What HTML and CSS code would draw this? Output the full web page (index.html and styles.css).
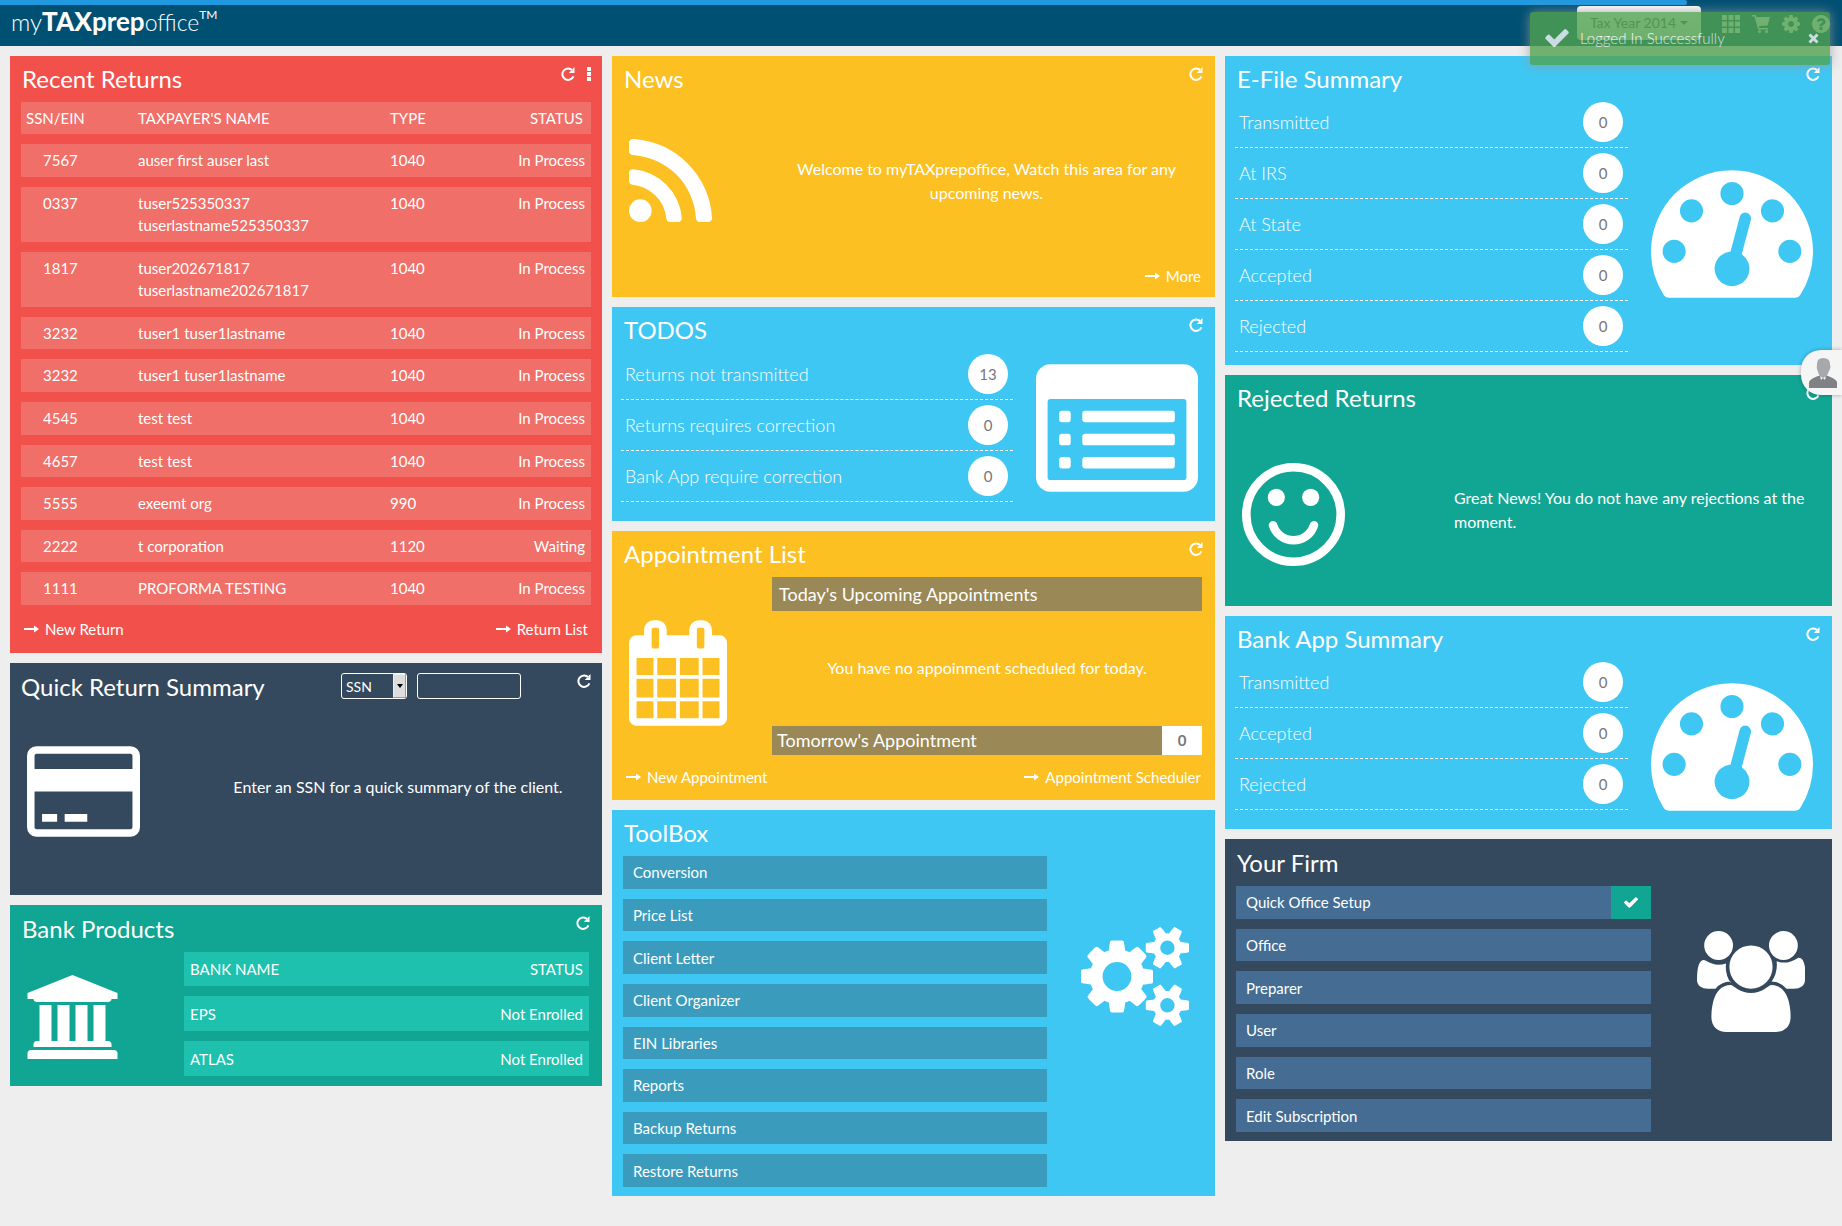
FILE: index.html
```html
<!DOCTYPE html>
<html lang="en">
<head>
<meta charset="utf-8">
<meta name="viewport" content="width=device-width, initial-scale=1">
<title>myTAXprepoffice</title>
<link rel="stylesheet" href="styles.css">
</head>
<body>

<svg class="sprite" aria-hidden="true">
  <symbol id="refresh" viewBox="0 0 14 14"><path d="M11.300 3.300A5.700 5.700 0 1 0 12.400 9.300" fill="none" stroke="currentColor" stroke-width="2"/><path d="M13.500 0v6H7.800l1.900-2 1.700-.3.300-2z"/></symbol>
  <symbol id="arrow" viewBox="0 0 15 8"><path d="M0 3h10V.5L15 4l-5 3.500V5H0z"/></symbol>
  <symbol id="check" viewBox="121 334 1550 1188"><path d="M1671 566q0 40-28 68l-724 724-136 136q-28 28-68 28t-68-28l-136-136-362-362q-28-28-28-68t28-68l136-136q28-28 68-28t68 28l294 295 656-657q28-28 68-28t68 28l136 136q28 28 28 68z"/></symbol>
  <symbol id="gauge" viewBox="0 256 1792 1408"><path d="M384 1152q0-53-37.500-90.500t-90.500-37.500-90.500 37.500-37.500 90.500 37.500 90.500 90.500 37.500 90.500-37.500 37.500-90.500zm192-448q0-53-37.500-90.500t-90.500-37.500-90.500 37.500-37.500 90.500 37.500 90.500 90.500 37.500 90.500-37.500 37.500-90.500zm428 481l101-382q6-26-7.500-48.500t-38.500-29.500-48 6.500-30 39.500l-101 382q-60 5-107 43.500t-63 98.500q-20 77 20 146t117 89 146-20 89-117q16-60-6-117t-72-91zm660-33q0-53-37.500-90.500t-90.500-37.500-90.500 37.500-37.500 90.500 37.500 90.500 90.500 37.500 90.500-37.500 37.500-90.500zm-640-640q0-53-37.500-90.500t-90.500-37.500-90.500 37.500-37.500 90.500 37.500 90.500 90.500 37.500 90.500-37.500 37.500-90.500zm448 192q0-53-37.500-90.500t-90.500-37.500-90.500 37.500-37.500 90.500 37.500 90.500 90.500 37.500 90.500-37.500 37.500-90.500zm320 448q0 261-141 483-19 29-54 29h-1402q-35 0-54-29-141-221-141-483 0-182 71-348t191-286 286-191 348-71 348 71 286 191 191 286 71 348z"/></symbol>
</svg>

<div class="progress"><div class="progress-value" style="width:91.6%"></div></div>

<header class="topbar">
  <a class="logo" href="#"><span class="logo-my">my</span><span class="logo-tax">TAX</span><span class="logo-prep">prep</span><span class="logo-office">office</span><span class="logo-tm">TM</span></a>
  <nav class="tools">
    <button class="year" type="button">Tax Year 2014<span class="caret"></span></button>
    <button class="tool" type="button" aria-label="Apps"><svg viewBox="0 0 18 18"><path d="M0 0h5v5H0zM6.500 0h5v5h-5zM13 0h5v5h-5zM0 6.500h5v5H0zM6.500 6.500h5v5h-5zM13 6.500h5v5h-5zM0 13h5v5H0zM6.500 13h5v5h-5zM13 13h5v5h-5z"/></svg></button>
    <button class="tool" type="button" aria-label="Cart"><svg viewBox="0 0 18 18"><path d="M0 0h3.500l.8 2H18l-2.500 8.500-8.700.5.600 2H16v1.500H6.200L2.500 1.500H0z"/><circle cx="7.500" cy="16.500" r="1.500"/><circle cx="14.500" cy="16.500" r="1.500"/></svg></button>
    <button class="tool" type="button" aria-label="Settings"><svg viewBox="128 128 1536 1536"><path d="M1152 896q0-106-75-181t-181-75-181 75-75 181 75 181 181 75 181-75 75-181zm512-109v222q0 12-8 23t-20 13l-185 28q-19 54-39 91 35 50 107 138 10 12 10 25t-9 23q-27 37-99 108t-94 71q-12 0-26-9l-138-108q-44 23-91 38-16 136-29 186-7 28-36 28h-222q-14 0-24.500-8.500t-11.500-21.500l-28-184q-49-16-90-37l-141 107q-10 9-25 9-14 0-25-11-126-114-165-168-7-10-7-23 0-12 8-23 15-21 51-66.500t54-70.500q-27-50-41-99l-183-27q-13-2-21-12.500t-8-23.500v-222q0-12 8-23t19-13l186-28q14-46 39-92-40-57-107-138-10-12-10-24 0-10 9-23 26-36 98.500-107.500t94.500-71.500q13 0 26 10l138 107q44-23 91-38 16-136 29-186 7-28 36-28h222q14 0 24.500 8.500t11.500 21.500l28 184q49 16 90 37l142-107q9-9 24-9 13 0 25 10 129 119 165 170 7 8 7 22 0 12-8 23-15 21-51 66.500t-54 70.500q26 50 41 98l183 28q13 2 21 12.500t8 23.500z"/></svg></button>
    <button class="tool" type="button" aria-label="Help"><svg viewBox="128 128 1536 1536"><path d="M1024 1376v-192q0-14-9-23t-23-9h-192q-14 0-23 9t-9 23v192q0 14 9 23t23 9h192q14 0 23-9t9-23zm256-672q0-88-55.500-163t-138.500-116-170-41q-243 0-371 213-15 24 8 42l132 100q7 6 19 6 16 0 25-12 53-68 86-92 34-24 86-24 48 0 85.500 26t37.500 59q0 38-20 61t-68 45q-63 28-115.500 86.500t-52.500 125.500v36q0 14 9 23t23 9h192q14 0 23-9t9-23q0-19 21.500-49.500t54.500-49.500q32-18 49-28.500t46-35 44.500-48 28-60.500 12.500-81zm384 192q0 209-103 385.500t-279.500 279.500-385.500 103-385.500-103-279.500-279.500-103-385.500 103-385.500 279.500-279.500 385.500-103 385.500 103 279.500 279.500 103 385.500z"/></svg></button>
  </nav>
</header>

<div class="toast" role="status">
  <svg class="toast-check"><use href="#check"/></svg>
  <span class="toast-text">Logged In Successfully</span>
  <button class="toast-close" type="button" aria-label="Close"><svg viewBox="0 0 11 11"><path d="M1.500 1.500l8 8M9.500 1.500l-8 8" stroke="currentColor" stroke-width="3"/></svg></button>
</div>

<button class="support" type="button" aria-label="Support"><svg viewBox="0 0 28 30"><path d="M8 6Q8 0 14 0q7 0 7 6v1q1 1 0 4-1 2-1.500 3l-1.500 4-4 2-3.500-2L9 14q-2-4-1-8z" fill="#a7a8ab"/><path d="M0 30v-6q1-3 9-6l2 0 1 4 2-2 2 2 1-4 2 0q8 3 9 6v6z" fill="#808184"/></svg></button>

<main class="board">
  <div class="column">

    <section class="card red recent">
      <div class="card-head">
        <h2>Recent Returns</h2>
        <button class="icon-btn" type="button" aria-label="Refresh"><svg><use href="#refresh"/></svg></button>
        <button class="icon-btn dots" type="button" aria-label="Menu"><svg viewBox="0 0 4 14"><path d="M0 0h4v4H0zM0 5h4v4H0zM0 10h4v4H0z"/></svg></button>
      </div>
      <table class="returns">
        <thead><tr><th class="ssn">SSN/EIN</th><th class="name">TAXPAYER'S NAME</th><th class="type">TYPE</th><th class="status">STATUS</th></tr></thead>
        <tbody>
          <tr><td>7567</td><td>auser first auser last</td><td>1040</td><td>In Process</td></tr>
          <tr><td>0337</td><td>tuser525350337<br>tuserlastname525350337</td><td>1040</td><td>In Process</td></tr>
          <tr><td>1817</td><td>tuser202671817<br>tuserlastname202671817</td><td>1040</td><td>In Process</td></tr>
          <tr><td>3232</td><td>tuser1 tuser1lastname</td><td>1040</td><td>In Process</td></tr>
          <tr><td>3232</td><td>tuser1 tuser1lastname</td><td>1040</td><td>In Process</td></tr>
          <tr><td>4545</td><td>test test</td><td>1040</td><td>In Process</td></tr>
          <tr><td>4657</td><td>test test</td><td>1040</td><td>In Process</td></tr>
          <tr><td>5555</td><td>exeemt org</td><td>990</td><td>In Process</td></tr>
          <tr><td>2222</td><td>t corporation</td><td>1120</td><td>Waiting</td></tr>
          <tr><td>1111</td><td>PROFORMA TESTING</td><td>1040</td><td>In Process</td></tr>
        </tbody>
      </table>
      <div class="card-foot">
        <a href="#"><svg><use href="#arrow"/></svg>New Return</a>
        <a class="end" href="#"><svg><use href="#arrow"/></svg>Return List</a>
      </div>
    </section>

    <section class="card navy quick">
      <div class="card-head">
        <h2>Quick Return Summary</h2>
        <div class="lookup">
          <div class="select"><select aria-label="Search by"><option>SSN</option><option>EIN</option></select><span class="select-arrow" aria-hidden="true"></span></div>
          <input type="text" aria-label="Number">
        </div>
        <button class="icon-btn" type="button" aria-label="Refresh"><svg><use href="#refresh"/></svg></button>
      </div>
      <div class="media">
        <svg class="pic pic-card" viewBox="0 128 1920 1536"><path d="M1760 128q66 0 113 47t47 113v1216q0 66-47 113t-113 47h-1600q-66 0-113-47t-47-113v-1216q0-66 47-113t113-47h1600zm-1600 128q-13 0-22.500 9.500t-9.500 22.500v224h1664v-224q0-13-9.500-22.500t-22.500-9.500h-1600zm1600 1280q13 0 22.500-9.500t9.500-22.500v-608h-1664v608q0 13 9.500 22.500t22.500 9.500h1600zm-1504-128v-128h256v128h-256zm384 0v-128h384v128h-384z"/></svg>
        <p class="message">Enter an SSN for a quick summary of the client.</p>
      </div>
    </section>

    <section class="card green bank">
      <div class="card-head">
        <h2>Bank Products</h2>
        <button class="icon-btn" type="button" aria-label="Refresh"><svg><use href="#refresh"/></svg></button>
      </div>
      <div class="bank-body">
        <svg class="pic pic-bank" viewBox="0 0 1920 1792"><path d="M960 0l960 384v128h-128q0 26-20.500 45t-48.500 19h-1526q-28 0-48.500-19t-20.500-45h-128v-128zm-704 640h256v768h128v-768h256v768h128v-768h256v768h128v-768h256v768h59q28 0 48.500 19t20.500 45v64h-1664v-64q0-26 20.500-45t48.500-19h59v-768zm1595 960q28 0 48.500 19t20.500 45v128h-1920v-128q0-26 20.500-45t48.500-19h1782z"/></svg>
        <table class="banks">
          <thead><tr><th>BANK NAME</th><th>STATUS</th></tr></thead>
          <tbody>
            <tr><td>EPS</td><td>Not Enrolled</td></tr>
            <tr><td>ATLAS</td><td>Not Enrolled</td></tr>
          </tbody>
        </table>
      </div>
    </section>
  </div>

  <div class="column">

    <section class="card yellow news">
      <div class="card-head">
        <h2>News</h2>
        <button class="icon-btn" type="button" aria-label="Refresh"><svg><use href="#refresh"/></svg></button>
      </div>
      <div class="media">
        <svg class="pic pic-rss" viewBox="192 128 1408 1408"><path d="M576 1344q0 80-56 136t-136 56-136-56-56-136 56-136 136-56 136 56 56 136zm512 123q2 28-17 48-18 21-47 21h-135q-25 0-43-16.500t-20-41.500q-22-229-184.500-391.500t-391.500-184.500q-25-2-41.500-20t-16.500-43v-135q0-29 21-47 17-17 43-17h5q160 13 306 80.500t259 181.500q114 113 181.500 259t80.500 306zm512 2q2 27-18 47-18 20-46 20h-143q-26 0-44.500-17.500t-19.500-42.500q-12-215-101-408.500t-231.500-336-336-231.500-408.500-102q-25-1-42.500-19.500t-17.500-43.500v-143q0-28 20-46 18-18 44-18h3q262 13 501.500 120t425.500 294q187 186 294 425.500t120 501.500z"/></svg>
        <p class="message">Welcome to myTAXprepoffice, Watch this area for any upcoming news.</p>
      </div>
      <div class="card-foot">
        <a class="end" href="#"><svg><use href="#arrow"/></svg>More</a>
      </div>
    </section>

    <section class="card blue todos">
      <div class="card-head">
        <h2>TODOS</h2>
        <button class="icon-btn" type="button" aria-label="Refresh"><svg><use href="#refresh"/></svg></button>
      </div>
      <div class="stats">
        <ul class="stat-list">
          <li>Returns not transmitted<b>13</b></li>
          <li>Returns requires correction<b>0</b></li>
          <li>Bank App require correction<b>0</b></li>
        </ul>
        <svg class="pic pic-wide" viewBox="0 128 1792 1408"><path fill-rule="evenodd" d="M160 128h1472a160 160 0 0 1 160 160v1088a160 160 0 0 1-160 160H160a160 160 0 0 1-160-160V288a160 160 0 0 1 160-160zM160 512a32 32 0 0 0-32 32v832a32 32 0 0 0 32 32h1472a32 32 0 0 0 32-32V544a32 32 0 0 0-32-32z"/><g><rect x="256" y="640" width="128" height="128" rx="32"/><rect x="256" y="896" width="128" height="128" rx="32"/><rect x="256" y="1152" width="128" height="128" rx="32"/><rect x="512" y="640" width="1024" height="128" rx="32"/><rect x="512" y="896" width="1024" height="128" rx="32"/><rect x="512" y="1152" width="1024" height="128" rx="32"/></g></svg>
      </div>
    </section>

    <section class="card yellow appointments">
      <div class="card-head">
        <h2>Appointment List</h2>
        <button class="icon-btn" type="button" aria-label="Refresh"><svg><use href="#refresh"/></svg></button>
      </div>
      <div class="agenda">
        <svg class="pic pic-calendar" viewBox="64 0 1664 1792"><path d="M192 1664h288v-288h-288v288zm352 0h320v-288h-320v288zm-352-352h288v-320h-288v320zm352 0h320v-320h-320v320zm-352-384h288v-288h-288v288zm736 736h320v-288h-320v288zm-384-736h320v-288h-320v288zm768 736h288v-288h-288v288zm-384-352h320v-320h-320v320zm-352-864v-288q0-13-9.500-22.500t-22.500-9.500h-64q-13 0-22.500 9.500t-9.500 22.500v288q0 13 9.500 22.500t22.500 9.500h64q13 0 22.500-9.500t9.500-22.500zm736 864h288v-320h-288v320zm-384-384h320v-288h-320v288zm384 0h288v-288h-288v288zm32-480v-288q0-13-9.500-22.500t-22.500-9.500h-64q-13 0-22.500 9.500t-9.500 22.500v288q0 13 9.500 22.500t22.500 9.500h64q13 0 22.500-9.500t9.500-22.500zm384-64v1280q0 52-38 90t-90 38h-1408q-52 0-90-38t-38-90v-1280q0-52 38-90t90-38h128v-96q0-66 47-113t113-47h64q66 0 113 47t47 113v96h384v-96q0-66 47-113t113-47h64q66 0 113 47t47 113v96h128q52 0 90 38t38 90z"/></svg>
        <div class="agenda-main">
          <h3 class="agenda-bar today">Today's Upcoming Appointments</h3>
          <p class="agenda-text">You have no appoinment scheduled for today.</p>
          <h3 class="agenda-bar tomorrow">Tomorrow's Appointment<b>0</b></h3>
        </div>
      </div>
      <div class="card-foot">
        <a href="#"><svg><use href="#arrow"/></svg>New Appointment</a>
        <a class="end" href="#"><svg><use href="#arrow"/></svg>Appointment Scheduler</a>
      </div>
    </section>

    <section class="card blue toolbox">
      <div class="card-head"><h2>ToolBox</h2></div>
      <div class="links">
        <ul class="link-list">
          <li><a href="#">Conversion</a></li>
          <li><a href="#">Price List</a></li>
          <li><a href="#">Client Letter</a></li>
          <li><a href="#">Client Organizer</a></li>
          <li><a href="#">EIN Libraries</a></li>
          <li><a href="#">Reports</a></li>
          <li><a href="#">Backup Returns</a></li>
          <li><a href="#">Restore Returns</a></li>
        </ul>
        <svg class="pic pic-group" viewBox="0 0 1920 1792"><path d="M896 896q0-106-75-181t-181-75-181 75-75 181 75 181 181 75 181-75 75-181zm768 512q0-52-38-90t-90-38-90 38-38 90q0 53 37.500 90.500t90.500 37.500 90.500-37.500 37.500-90.500zm0-1024q0-52-38-90t-90-38-90 38-38 90q0 53 37.500 90.500t90.500 37.500 90.500-37.500 37.500-90.500zm-384 421v185q0 10-7 19.500t-16 10.500l-155 24q-11 35-32 76 34 48 90 115 7 11 7 20 0 12-7 19-23 30-82.500 89.500t-78.500 59.500q-11 0-21-7l-115-90q-37 19-77 31-11 108-23 155-7 24-30 24h-186q-11 0-20-7.500t-10-17.500l-23-153q-34-10-75-31l-118 89q-7 7-20 7-11 0-21-8-144-133-144-160 0-9 7-19 10-14 41-53t47-61q-23-44-35-82l-152-24q-10-1-17-9.500t-7-19.500v-185q0-10 7-19.500t16-10.500l155-24q11-35 32-76-34-48-90-115-7-11-7-20 0-12 7-20 22-30 82-89t79-59q11 0 21 7l115 90q34-18 77-32 11-108 23-154 7-24 30-24h186q11 0 20 7.500t10 17.500l23 153q34 10 75 31l118-89q8-7 20-7 11 0 21 8 144 133 144 160 0 8-7 19-12 16-42 54t-45 60q23 48 34 82l152 23q10 2 17 10.500t7 19.500zm640 533v140q0 16-149 31-12 27-30 52 51 113 51 138 0 4-4 7-122 71-124 71-8 0-46-47t-52-68q-20 2-30 2t-30-2q-14 21-52 68t-46 47q-2 0-124-71-4-3-4-7 0-25 51-138-18-25-30-52-149-15-149-31v-140q0-16 149-31 13-29 30-52-51-113-51-138 0-4 4-7 4-2 35-20t59-34 30-16q8 0 46 46.500t52 67.500q20-2 30-2t30 2q51-71 92-112l6-2q4 0 124 70 4 3 4 7 0 25-51 138 17 23 30 52 149 15 149 31zm0-1024v140q0 16-149 31-12 27-30 52 51 113 51 138 0 4-4 7-122 71-124 71-8 0-46-47t-52-68q-20 2-30 2t-30-2q-14 21-52 68t-46 47q-2 0-124-71-4-3-4-7 0-25 51-138-18-25-30-52-149-15-149-31v-140q0-16 149-31 13-29 30-52-51-113-51-138 0-4 4-7 4-2 35-20t59-34 30-16q8 0 46 46.500t52 67.500q20-2 30-2t30 2q51-71 92-112l6-2q4 0 124 70 4 3 4 7 0 25-51 138 17 23 30 52 149 15 149 31z"/></svg>
      </div>
    </section>
  </div>

  <div class="column">

    <section class="card blue efile">
      <div class="card-head">
        <h2>E-File Summary</h2>
        <button class="icon-btn" type="button" aria-label="Refresh"><svg><use href="#refresh"/></svg></button>
      </div>
      <div class="stats">
        <ul class="stat-list">
          <li>Transmitted<b>0</b></li>
          <li>At IRS<b>0</b></li>
          <li>At State<b>0</b></li>
          <li>Accepted<b>0</b></li>
          <li>Rejected<b>0</b></li>
        </ul>
        <svg class="pic pic-wide"><use href="#gauge"/></svg>
      </div>
    </section>

    <section class="card green rejected">
      <div class="card-head">
        <h2>Rejected Returns</h2>
        <button class="icon-btn" type="button" aria-label="Refresh"><svg><use href="#refresh"/></svg></button>
      </div>
      <div class="media">
        <svg class="pic pic-smile" viewBox="128 128 1536 1536"><path d="M1262 1075q-37 121-138 195t-228 74-228-74-138-195q-8-25 4-48.500t38-31.500q25-8 48.500 4t31.500 38q25 80 92.500 129.500t151.500 49.500 151.500-49.500 92.500-129.500q8-26 32-38t49-4 37 31.500 4 48.500z"/><circle cx="640" cy="640" r="128"/><circle cx="1152" cy="640" r="128"/><circle cx="896" cy="896" r="704" fill="none" stroke="currentColor" stroke-width="128"/></svg>
        <p class="message">Great News! You do not have any rejections at the moment.</p>
      </div>
    </section>

    <section class="card blue bankapp">
      <div class="card-head">
        <h2>Bank App Summary</h2>
        <button class="icon-btn" type="button" aria-label="Refresh"><svg><use href="#refresh"/></svg></button>
      </div>
      <div class="stats">
        <ul class="stat-list">
          <li>Transmitted<b>0</b></li>
          <li>Accepted<b>0</b></li>
          <li>Rejected<b>0</b></li>
        </ul>
        <svg class="pic pic-wide"><use href="#gauge"/></svg>
      </div>
    </section>

    <section class="card navy firm">
      <div class="card-head"><h2>Your Firm</h2></div>
      <div class="links">
        <ul class="link-list">
          <li><a href="#">Quick Office Setup</a><span class="done"><svg><use href="#check"/></svg></span></li>
          <li><a href="#">Office</a></li>
          <li><a href="#">Preparer</a></li>
          <li><a href="#">User</a></li>
          <li><a href="#">Role</a></li>
          <li><a href="#">Edit Subscription</a></li>
        </ul>
        <svg class="pic pic-group" viewBox="0 0 1920 1792"><path d="M593 896q-162 5-265 128h-134q-82 0-138-40.500t-56-118.500q0-353 124-353 6 0 43.500 21t97.500 42.500 119 21.500q67 0 133-23-5 37-5 66 0 159 93 293zm1071 637q0 120-73 189.500t-194 69.500h-874q-121 0-194-69.500t-73-189.500q0-53 3.500-103.500t14-109 26.500-108.500 43-97.500 62-81 85.500-53.500 111.500-20q10 0 43 21.500t73 48 107 48 135 21.500 135-21.500 107-48 73-48 43-21.500q61 0 111.500 20t85.500 53.500 62 81 43 97.500 26.500 108.500 14 109 3.500 103.500zm-1024-1277q0 106-75 181t-181 75-181-75-75-181 75-181 181-75 181 75 75 181zm704 384q0 159-112.500 271.500t-271.500 112.500-271.500-112.500-112.500-271.500 112.500-271.500 271.500-112.500 271.500 112.500 112.500 271.500zm576 225q0 78-56 118.500t-138 40.500h-134q-103-123-265-128 93-134 93-293 0-29-5-66 66 23 133 23 59 0 119-21.500t97.500-42.500 43.500-21q124 0 124 353zm-128-609q0 106-75 181t-181 75-181-75-75-181 75-181 181-75 181 75 75 181z"/></svg>
      </div>
    </section>
  </div>
</main>
</body>
</html>
```
FILE: styles.css
```css
* { box-sizing: border-box; }

body {
  margin: 0;
  background: #eee;
  color: #fff;
  font: 15px/22px Lato, "Open Sans", sans-serif;
}

h2, h3, p, ul { margin: 0; padding: 0; font-weight: 400; }
ul { list-style: none; }
a { color: inherit; text-decoration: none; }
svg { fill: currentColor; display: block; }
button { border: 0; padding: 0; background: none; color: inherit; font: inherit; cursor: pointer; }
.sprite { position: absolute; width: 0; height: 0; }

/* Loading bar across the very top */
.progress { position: absolute; top: 0; left: 0; right: 0; height: 5px; background: #005073; }
.progress-value { height: 5px; background: #2199e0; border-radius: 0 2px 2px 0; }

.topbar {
  display: flex;
  align-items: flex-start;
  justify-content: space-between;
  height: 46px;
  padding: 6px 12px 0 11px;
  background: #005073;
}

.logo { display: flex; align-items: baseline; line-height: 30px; }
.logo-my { font-size: 24px; font-weight: 300; }
.logo-tax { font-size: 26px; font-weight: 900; }
.logo-prep { font-size: 26px; font-weight: 700; }
.logo-office { font-size: 23px; font-weight: 300; }
.logo-tm { align-self: flex-start; font-size: 12px; line-height: 18px; }

.tools { display: flex; align-items: center; gap: 12px; }
.year {
  display: flex;
  align-items: center;
  gap: 4px;
  height: 34px;
  margin-right: 9px;
  padding: 0 13px;
  border-radius: 4px;
  background: linear-gradient(#fff, #e6e6e6);
  color: #555;
  font-size: 14px;
}
.caret { border: 4px solid transparent; border-top-color: #555; border-bottom: 0; }
.tool { padding-top: 2px; color: #eee; }
.tool svg { width: 18px; height: 18px; }

.toast {
  position: absolute;
  z-index: 3;
  top: 12px;
  right: 12px;
  display: flex;
  align-items: center;
  width: 300px;
  height: 53px;
  padding: 0 11px 1px 15px;
  border-radius: 3px;
  background: #51a351;
  box-shadow: 0 0 12px #999;
  opacity: .8;
}
.toast-check { width: 24px; height: 18px; }
.toast-text { flex: 1; margin-left: 11px; font-weight: 300; }
.toast-close svg { width: 11px; height: 11px; }

.support {
  position: absolute;
  z-index: 2;
  top: 350px;
  right: 0;
  width: 41px;
  height: 45px;
  padding-left: 8px;
  border-radius: 20px 0 0 20px;
  background: #f5f5f5;
  box-shadow: 0 0 4px rgba(0, 0, 0, .3);
}
.support svg { width: 28px; height: 30px; }

/* Dashboard */
.board {
  display: grid;
  grid-template-columns: 592fr 603fr 607fr;
  align-items: start;
  gap: 10px;
  padding: 10px;
}
.column { display: grid; gap: 10px; }

.card { display: flex; flex-direction: column; }
.red { background: #f2514b; }
.navy { background: #34495e; }
.green { background: #10a693; }
.yellow { background: #fcc022; }
.blue { background: #3fc7f4; }

.recent { min-height: 597px; }
.quick { min-height: 232px; }
.bank { min-height: 181px; }
.news { min-height: 241px; }
.todos { min-height: 214px; }
.appointments { min-height: 269px; }
.toolbox { min-height: 386px; }
.efile { min-height: 309px; }
.rejected { min-height: 231px; }
.bankapp { min-height: 213px; }
.firm { min-height: 302px; }

.card-head {
  display: flex;
  align-items: flex-start;
  height: 41px;
  padding: 10px 12px 0;
}
.card-head h2 { flex: 1; font-size: 24px; line-height: 26px; }
.icon-btn { margin-top: 1px; }
.icon-btn svg { width: 14px; height: 14px; }
.dots { margin-left: 12px; }
.dots svg { width: 4px; }
.quick .card-head, .recent .card-head { padding-right: 11px; }
.quick .card-head { padding-left: 11px; }
.quick h2, .bank h2, .firm h2 { line-height: 28px; }

.card-foot { display: flex; padding: 0 14px; }
.card-foot a { display: flex; align-items: center; gap: 6px; }
.card-foot svg { width: 15px; height: 8px; }
.card-foot .end { margin-left: auto; }

table { border-collapse: separate; border-spacing: 0 10px; }
th, td { padding: 5px 0; font-weight: 400; text-align: left; vertical-align: top; }

.returns { height: 523px; margin: -5px 11px 3px; table-layout: fixed; }
.returns tr { background: #f06f68; }
.returns .ssn { width: 117px; padding-left: 5px; }
.returns .name { width: 252px; }
.returns td:first-child { padding-left: 22px; }
.returns td:last-child { padding-right: 6px; text-align: right; }
.returns .status { padding-right: 8px; text-align: right; }

.lookup { display: flex; gap: 10px; margin-right: 56px; }
.select, .lookup input { height: 26px; border: 1px solid #fff; border-radius: 3px; }
.select { display: flex; width: 66px; }
.select select {
  flex: 1;
  min-width: 0;
  padding: 0 0 0 4px;
  border: 0;
  appearance: none;
  background: none;
  color: #fff;
  font: 14px Lato, sans-serif;
}
.select-arrow {
  display: flex;
  align-items: center;
  justify-content: center;
  width: 13px;
  border: 1px outset #eee;
  background: #ddd;
}
.select-arrow::before { content: ""; border: 3px solid transparent; border-top: 4px solid #000; border-bottom: 0; }
.lookup input { width: 104px; background: none; color: #fff; }

.pic { flex: none; }
.pic-card { width: 113px; height: 91px; }
.pic-bank { width: 91px; height: 84px; }
.pic-rss { width: 83px; height: 83px; }
.pic-wide { width: 162px; height: 128px; }
.pic-calendar { width: 98px; height: 106px; }
.pic-group { width: 108px; height: 101px; }
.pic-smile { width: 103px; height: 103px; }

.media { flex: 1; display: flex; align-items: flex-start; padding-left: 17px; }
.message { flex: 1; font-size: 16px; line-height: 24px; text-align: center; }
.quick .media { padding-top: 42px; }
.quick .message { margin: 29px 0 0 54px; }
.news .media { padding-top: 42px; }
.news .message { margin-top: 18px; padding: 0 14px 0 60px; }
.news .card-foot { padding-bottom: 10px; }
.rejected .media { padding-top: 47px; }
.rejected .message { margin-top: 23px; padding: 0 20px 0 109px; text-align: left; }

.bank-body { display: flex; align-items: flex-start; justify-content: space-between; padding: 0 13px 0 17px; }
.pic-bank { margin-top: 29px; }
.banks { width: 405px; margin-top: -4px; }
.banks tr { background: #1dc1ae; }
.banks th { padding: 6px; }
.banks td { padding: 7px 6px 6px; }
.banks tr > :last-child { text-align: right; }

.stats { display: flex; align-items: flex-start; gap: 23px; padding: 0 19px 0 10px; }
.stat-list { flex: 1; }
.stat-list li {
  display: flex;
  align-items: center;
  justify-content: space-between;
  padding: 5px 5px 5px 4px;
  border-bottom: 1px dashed #fff;
  font-size: 18px;
  font-weight: 300;
}
.stat-list b {
  width: 40px;
  border-radius: 50%;
  background: #fff;
  color: #777;
  font-size: 15px;
  line-height: 40px;
  text-align: center;
}
.todos .stats { padding: 1px 17px 0 9px; }
.todos .pic { margin-top: 15px; }
.efile .pic { margin-top: 73px; }
.bankapp .pic { margin-top: 26px; }

.agenda { display: flex; justify-content: space-between; padding: 5px 13px 0 17px; }
.pic-calendar { margin-top: 43px; }
.agenda-main { width: 430px; }
.agenda-bar { display: flex; background: #9a8856; font-size: 18px; }
.today { padding-left: 7px; line-height: 34px; }
.agenda-text { padding: 45px 0 46px; font-size: 16px; line-height: 24px; text-align: center; }
.tomorrow { padding-left: 5px; line-height: 29px; }
.tomorrow b { width: 40px; margin-left: auto; background: #fff; color: #777; font-size: 15px; text-align: center; }
.appointments .card-foot { padding-top: 11px; }

.links { flex: 1; display: flex; align-items: flex-start; padding: 5px 26px 9px 11px; }
.link-list { flex: 1; align-self: stretch; display: grid; grid-auto-rows: 1fr; gap: 10px; }
.link-list li { display: flex; background: #3a9bbd; }
.link-list a { flex: 1; align-self: center; padding-left: 10px; }
.firm .links { padding: 6px 27px 9px 11px; }
.firm .link-list li { background: #456c92; }
.toolbox .pic { margin: 70px 0 0 34px; }
.firm .pic { margin: 45px 0 0 46px; }
.done { display: flex; align-items: center; justify-content: center; width: 40px; background: #10a693; }
.done svg { width: 14px; height: 11px; }
```
